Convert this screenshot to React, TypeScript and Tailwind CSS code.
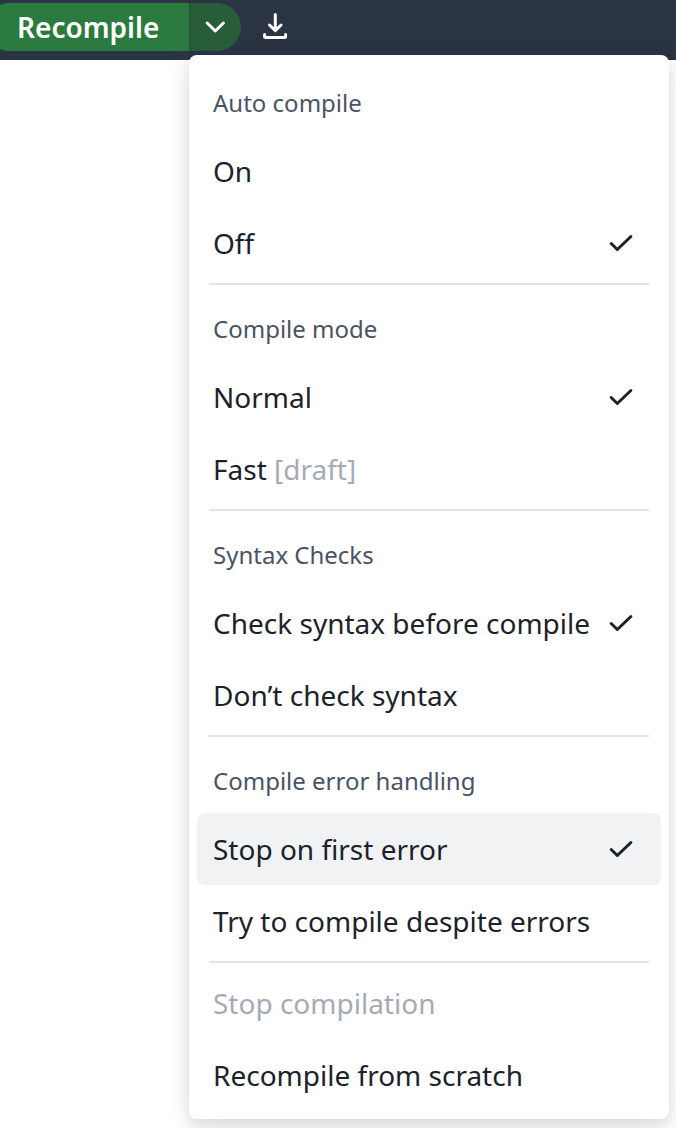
import type { ReactNode } from "react";

interface MenuItem {
  label: string;
  hint?: string;
  checked?: boolean;
  active?: boolean;
  disabled?: boolean;
}

interface MenuSection {
  title?: string;
  items: MenuItem[];
}

const sections: MenuSection[] = [
  {
    title: "Auto compile",
    items: [{ label: "On" }, { label: "Off", checked: true }],
  },
  {
    title: "Compile mode",
    items: [
      { label: "Normal", checked: true },
      { label: "Fast", hint: "[draft]" },
    ],
  },
  {
    title: "Syntax Checks",
    items: [
      { label: "Check syntax before compile", checked: true },
      { label: "Don’t check syntax" },
    ],
  },
  {
    title: "Compile error handling",
    items: [
      { label: "Stop on first error", checked: true, active: true },
      { label: "Try to compile despite errors" },
    ],
  },
  {
    items: [
      { label: "Stop compilation", disabled: true },
      { label: "Recompile from scratch" },
    ],
  },
];

function Icon({ className, children }: { className: string; children: ReactNode }) {
  return (
    <svg
      className={className}
      fill="none"
      stroke="currentColor"
      strokeWidth={3}
      strokeLinecap="round"
      strokeLinejoin="round"
      viewBox="0 0 32 32"
    >
      {children}
    </svg>
  );
}

function Toolbar() {
  return (
    <div className="flex h-[60px] items-start bg-[#2b3443] pt-[3px] text-white">
      <div className="-ml-[15px] flex h-12 overflow-hidden rounded-full">
        <button className="w-[204px] bg-[#2b7a40] pl-8 text-left text-[28px] leading-[48px] font-semibold">
          Recompile
        </button>
        <button className="flex w-[52px] items-center border-l-2 border-[#265537] bg-[#285d3a] pl-2">
          <Icon className="size-8">
            <path d="M8.2 12l8.1 8 8.1-8" />
          </Icon>
        </button>
      </div>
      <button className="ml-[18px] flex h-12 items-center">
        <Icon className="size-8">
          <path d="M16.3 3.6v15.8M10.5 14l5.8 5.6 5.8-5.6" />
          <path d="M5.6 23.6v1.9q0 1 1 1h19q1 0 1-1v-1.9" />
        </Icon>
      </button>
    </div>
  );
}

function Item({ item }: { item: MenuItem }) {
  return (
    <li
      className={`flex h-[72px] items-center justify-between rounded-lg pl-4 pr-6 text-[28px] leading-10 whitespace-nowrap ${
        item.active ? "bg-[#f1f2f4]" : ""
      } ${item.disabled ? "text-[#a5abb6]" : "text-[#1b222c]"}`}
    >
      <span>
        {item.label}
        {item.hint && <span className="text-[#a5abb6]"> {item.hint}</span>}
      </span>
      {item.checked && (
        <Icon className="size-8 shrink-0">
          <path d="M6.2 16.5l6.1 6L25.9 9.5" />
        </Icon>
      )}
    </li>
  );
}

export default function App() {
  return (
    <div className="relative h-[1128px] w-[676px] overflow-hidden bg-white font-['Noto_Sans',sans-serif]">
      <Toolbar />
      {/* Compile options dropdown */}
      <div className="absolute top-[55px] left-[189px] w-[480px] rounded-lg bg-white p-2 shadow-[0_4px_24px_rgba(30,37,48,0.12),0_8px_12px_rgba(30,37,48,0.08)]">
        {sections.map((section, i) => (
          <div key={i}>
            {i > 0 && <hr className="mx-3 my-1 h-0.5 border-0 bg-[#e1e4e9]" />}
            {section.title && (
              <h3 className="h-[72px] px-4 pt-5 text-[24px] leading-10 text-[#495365]">
                {section.title}
              </h3>
            )}
            <ul>
              {section.items.map((item) => (
                <Item key={item.label} item={item} />
              ))}
            </ul>
          </div>
        ))}
      </div>
    </div>
  );
}
